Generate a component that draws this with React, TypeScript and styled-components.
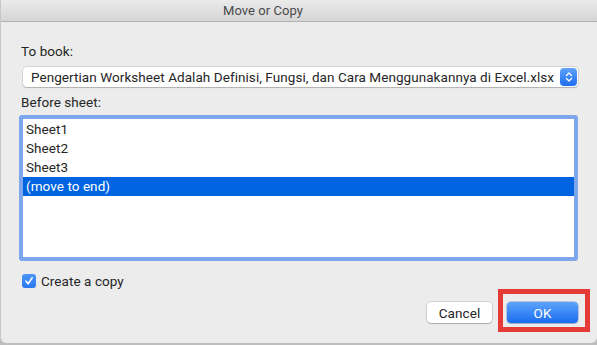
import styled, { createGlobalStyle } from "styled-components";

const GlobalStyle = createGlobalStyle`
  html, body {
    margin: 0;
    padding: 0;
    background: #bdbdbd;
  }
  body {
    font-family: Roboto, "Liberation Sans", sans-serif;
    font-size: 13.5px;
    letter-spacing: 0.06px;
    -webkit-font-smoothing: antialiased;
  }
`;

const Window = styled.div`
  width: 597px;
  height: 343px;
  background: #ececec;
  border-left: 1px solid #c8c8c8;
  box-sizing: border-box;
  border-radius: 0 0 6px 6px;
  display: flex;
  flex-direction: column;
  overflow: hidden;
`;

const TitleBar = styled.div`
  height: 22px;
  flex: none;
  box-sizing: border-box;
  background: linear-gradient(#ebebeb, #d5d5d5);
  border-bottom: 1px solid #b1b1b1;
  display: flex;
  align-items: center;
  justify-content: center;
  padding-right: 72px;
  font-size: 13px;
  color: #4a4a4a;
`;

const Body = styled.div`
  flex: 1;
  display: flex;
  flex-direction: column;
  padding: 0 19px 0 20px;
`;

const Label = styled.div<{ $top: number }>`
  margin-top: ${(p) => p.$top}px;
  line-height: 16px;
  color: #262626;
`;

const Select = styled.div`
  margin-top: 8px;
  margin-left: 2px;
  height: 20px;
  box-sizing: border-box;
  background: #fff;
  border-radius: 4px;
  box-shadow: 0 0 0 0.5px rgba(0, 0, 0, 0.18), 0 1px 1px rgba(0, 0, 0, 0.18);
  display: flex;
  align-items: center;
  padding: 0 1px 0 8px;
  color: #262626;
  white-space: nowrap;
`;

const SelectText = styled.span`
  flex: 1;
  overflow: hidden;
`;

const Stepper = styled.div`
  width: 17px;
  height: 18px;
  border-radius: 4px;
  background: linear-gradient(#5fa2fa, #1f6df2);
  display: flex;
  align-items: center;
  justify-content: center;
`;

const ListBox = styled.div`
  margin-top: 5px;
  margin-left: -2px;
  height: 146px;
  flex: none;
  box-sizing: border-box;
  border: 4px solid #7ea6ea;
  border-radius: 3px;
  background: #fff;
  padding-top: 1px;
  display: flex;
  flex-direction: column;
`;

const Row = styled.div<{ $selected?: boolean }>`
  height: 19px;
  line-height: 19px;
  padding-left: 3px;
  color: ${(p) => (p.$selected ? "#fff" : "#262626")};
  background: ${(p) => (p.$selected ? "#0064e1" : "transparent")};
`;

const CheckRow = styled.label`
  margin-top: 12px;
  margin-left: 1px;
  height: 16px;
  display: flex;
  align-items: center;
  gap: 5px;
  color: #262626;
`;

const CheckBox = styled.span`
  width: 14px;
  height: 14px;
  border-radius: 3px;
  background: linear-gradient(#4c95f8, #2b78f1);
  display: flex;
  align-items: center;
  justify-content: center;
`;

const Footer = styled.div`
  margin-top: 13px;
  display: flex;
  justify-content: flex-end;
  align-items: center;
  gap: 15px;
`;

const Button = styled.button<{ $primary?: boolean }>`
  position: relative;
  height: 21px;
  width: ${(p) => (p.$primary ? 71 : 65)}px;
  border: none;
  border-radius: 4px;
  font-family: inherit;
  font-size: 13.5px;
  letter-spacing: inherit;
  padding: 0;
  color: ${(p) => (p.$primary ? "#fff" : "#262626")};
  background: ${(p) =>
    p.$primary ? "linear-gradient(#5ea4fb, #1a6cf0)" : "#fff"};
  box-shadow: ${(p) =>
    p.$primary
      ? "0 0 0 0.5px rgba(20, 80, 200, 0.5), 0 1px 1px rgba(0,0,0,0.15)"
      : "0 0 0 0.5px rgba(0, 0, 0, 0.22), 0 1px 1px rgba(0, 0, 0, 0.18)"};
`;

const Highlight = styled.span`
  position: absolute;
  top: -13px;
  left: -9px;
  right: -12px;
  bottom: -9px;
  border: 5px solid #e53a35;
  pointer-events: none;
`;

export default function App() {
  return (
    <>
      <GlobalStyle />
      <Window>
        <TitleBar>Move or Copy</TitleBar>
        <Body>
          <Label $top={21}>To book:</Label>
          <Select>
            <SelectText>
              Pengertian Worksheet Adalah Definisi, Fungsi, dan Cara Menggunakannya di Excel.xlsx
            </SelectText>
            <Stepper>
              <svg width="8" height="12" viewBox="0 0 8 12">
                <path
                  d="M1.5 4.5 L4 2 L6.5 4.5 M1.5 7.5 L4 10 L6.5 7.5"
                  fill="none"
                  stroke="#fff"
                  strokeWidth="1.3"
                  strokeLinecap="round"
                  strokeLinejoin="round"
                />
              </svg>
            </Stepper>
          </Select>
          <Label $top={7}>Before sheet:</Label>
          <ListBox>
            <Row>Sheet1</Row>
            <Row>Sheet2</Row>
            <Row>Sheet3</Row>
            <Row $selected>(move to end)</Row>
          </ListBox>
          <CheckRow>
            <CheckBox>
              <svg width="10" height="10" viewBox="0 0 10 10">
                <path
                  d="M2 5.2 L4.2 7.8 L8.2 1.8"
                  fill="none"
                  stroke="#fff"
                  strokeWidth="1.6"
                  strokeLinecap="round"
                  strokeLinejoin="round"
                />
              </svg>
            </CheckBox>
            Create a copy
          </CheckRow>
          <Footer>
            <Button>Cancel</Button>
            <Button $primary>
              OK
              <Highlight />
            </Button>
          </Footer>
        </Body>
      </Window>
    </>
  );
}
